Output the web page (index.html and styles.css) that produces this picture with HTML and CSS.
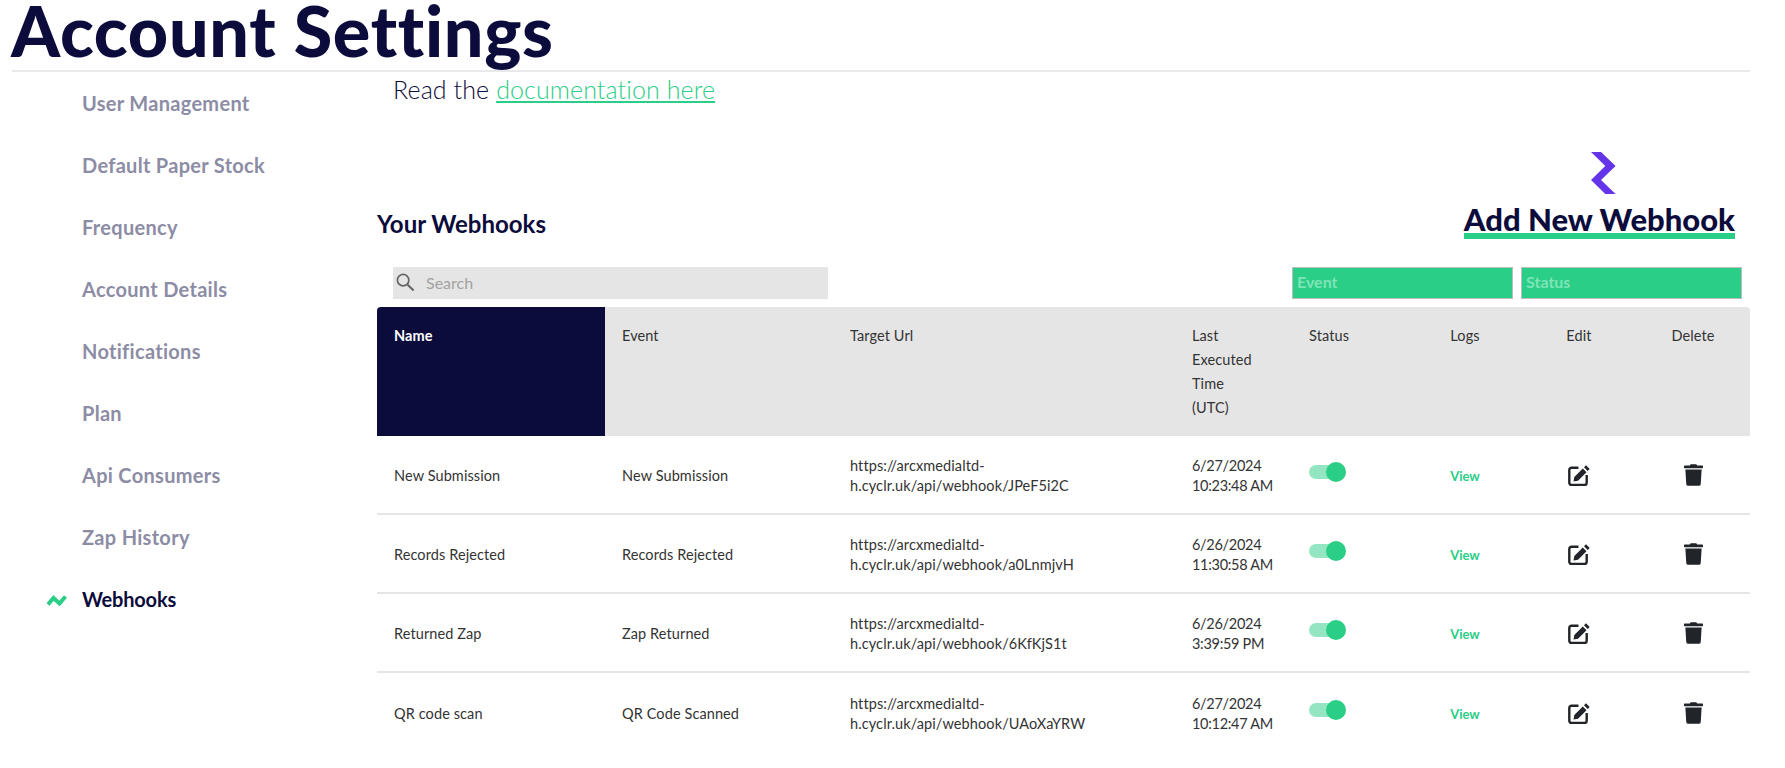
FILE: index.html
```html
<!DOCTYPE html>
<html lang="en">
<head>
<meta charset="utf-8">
<title>Account Settings</title>
<link rel="stylesheet" href="styles.css">
</head>
<body>
<header class="page-head"><h1 class="page-title">Account Settings</h1></header>
<div class="layout">
  <nav class="side">
    <a class="side-item">User Management</a>
    <a class="side-item">Default Paper Stock</a>
    <a class="side-item">Frequency</a>
    <a class="side-item">Account Details</a>
    <a class="side-item">Notifications</a>
    <a class="side-item">Plan</a>
    <a class="side-item">Api Consumers</a>
    <a class="side-item">Zap History</a>
    <a class="side-item side-active">
      <svg class="side-mark" viewBox="0 0 20 12"><path d="M1 10.5 6.500 4l6 5.500 6-7" fill="none" stroke="#2ace86" stroke-width="4"/></svg>
      Webhooks
    </a>
  </nav>
  <main class="main">
    <p class="doc">Read the <a class="doc-link">documentation here</a></p>
    <div class="bar">
      <h2 class="bar-title">Your Webhooks</h2>
      <div class="add">
        <svg class="add-icon" viewBox="0 0 25 42"><polygon points="0,0 10,0 24.600,14 10,28 24.600,42 14.300,42 0,28 14.300,14" fill="#6334e8"/></svg>
        <a class="add-link">Add New Webhook</a>
      </div>
    </div>
    <div class="filters">
      <div class="search">
        <svg class="search-icon" viewBox="0 0 20 20"><circle cx="7.500" cy="7.500" r="6" fill="none" stroke="#666" stroke-width="1.800"/><path d="M12 12l6.500 6.500" stroke="#666" stroke-width="2.200"/></svg>
        <span>Search</span>
      </div>
      <div class="pick">Event</div>
      <div class="pick">Status</div>
    </div>
    <table class="hooks">
      <colgroup>
        <col class="c-name"><col class="c-event"><col class="c-url"><col class="c-time"><col class="c-status"><col class="c-act"><col class="c-act"><col class="c-act">
      </colgroup>
      <thead>
        <tr>
          <th class="th-name">Name</th><th>Event</th><th>Target Url</th><th>Last<br>Executed<br>Time<br>(UTC)</th><th>Status</th><th class="mid">Logs</th><th class="mid">Edit</th><th class="mid">Delete</th>
        </tr>
      </thead>
      <tbody>
        <tr>
          <td>New Submission</td><td>New Submission</td><td>https://arcxmedialtd-<br>h.cyclr.uk/api/webhook/JPeF5i2C</td><td class="when">6/27/2024<br>10:23:48 AM</td>
          <td><span class="toggle"><span class="knob"></span></span></td><td class="mid"><a class="view">View</a></td>
          <td class="mid"><svg class="ico-edit" viewBox="0 0 22 22"><path d="M10.500 3.800H3.500a2.200 2.200 0 0 0-2.200 2.200v12.800a2.200 2.200 0 0 0 2.200 2.200h13a2.200 2.200 0 0 0 2.200-2.200V11" fill="none" stroke="#212529" stroke-width="2.400"/><path d="M5.500 17.500 6.300 13 14.800 4.500 18.500 8.200 10 16.700zM16 3.300 18 1.300 21.700 5 19.700 7z" fill="#212529"/></svg></td>
          <td class="mid"><svg class="ico-trash" viewBox="0 0 448 512"><path d="M432 32H312l-9.400-18.700A24 24 0 0 0 281.100 0H166.800a23.720 23.720 0 0 0-21.400 13.300L136 32H16A16 16 0 0 0 0 48v32a16 16 0 0 0 16 16h416a16 16 0 0 0 16-16V48a16 16 0 0 0-16-16zM53.200 467a48 48 0 0 0 47.900 45h245.800a48 48 0 0 0 47.900-45L416 128H32z" fill="#212529"/></svg></td>
        </tr>
        <tr>
          <td>Records Rejected</td><td>Records Rejected</td><td>https://arcxmedialtd-<br>h.cyclr.uk/api/webhook/a0LnmjvH</td><td class="when">6/26/2024<br>11:30:58 AM</td>
          <td><span class="toggle"><span class="knob"></span></span></td><td class="mid"><a class="view">View</a></td>
          <td class="mid"><svg class="ico-edit" viewBox="0 0 22 22"><path d="M10.500 3.800H3.500a2.200 2.200 0 0 0-2.200 2.200v12.800a2.200 2.200 0 0 0 2.200 2.200h13a2.200 2.200 0 0 0 2.200-2.200V11" fill="none" stroke="#212529" stroke-width="2.400"/><path d="M5.500 17.500 6.300 13 14.800 4.500 18.500 8.200 10 16.700zM16 3.300 18 1.300 21.700 5 19.700 7z" fill="#212529"/></svg></td>
          <td class="mid"><svg class="ico-trash" viewBox="0 0 448 512"><path d="M432 32H312l-9.400-18.700A24 24 0 0 0 281.100 0H166.800a23.720 23.720 0 0 0-21.400 13.300L136 32H16A16 16 0 0 0 0 48v32a16 16 0 0 0 16 16h416a16 16 0 0 0 16-16V48a16 16 0 0 0-16-16zM53.200 467a48 48 0 0 0 47.900 45h245.800a48 48 0 0 0 47.900-45L416 128H32z" fill="#212529"/></svg></td>
        </tr>
        <tr>
          <td>Returned Zap</td><td>Zap Returned</td><td>https://arcxmedialtd-<br>h.cyclr.uk/api/webhook/6KfKjS1t</td><td class="when">6/26/2024<br>3:39:59 PM</td>
          <td><span class="toggle"><span class="knob"></span></span></td><td class="mid"><a class="view">View</a></td>
          <td class="mid"><svg class="ico-edit" viewBox="0 0 22 22"><path d="M10.500 3.800H3.500a2.200 2.200 0 0 0-2.200 2.200v12.800a2.200 2.200 0 0 0 2.200 2.200h13a2.200 2.200 0 0 0 2.200-2.200V11" fill="none" stroke="#212529" stroke-width="2.400"/><path d="M5.500 17.500 6.300 13 14.800 4.500 18.500 8.200 10 16.700zM16 3.300 18 1.300 21.700 5 19.700 7z" fill="#212529"/></svg></td>
          <td class="mid"><svg class="ico-trash" viewBox="0 0 448 512"><path d="M432 32H312l-9.400-18.700A24 24 0 0 0 281.100 0H166.800a23.720 23.720 0 0 0-21.400 13.300L136 32H16A16 16 0 0 0 0 48v32a16 16 0 0 0 16 16h416a16 16 0 0 0 16-16V48a16 16 0 0 0-16-16zM53.200 467a48 48 0 0 0 47.900 45h245.800a48 48 0 0 0 47.900-45L416 128H32z" fill="#212529"/></svg></td>
        </tr>
        <tr>
          <td>QR code scan</td><td>QR Code Scanned</td><td>https://arcxmedialtd-<br>h.cyclr.uk/api/webhook/UAoXaYRW</td><td class="when">6/27/2024<br>10:12:47 AM</td>
          <td><span class="toggle"><span class="knob"></span></span></td><td class="mid"><a class="view">View</a></td>
          <td class="mid"><svg class="ico-edit" viewBox="0 0 22 22"><path d="M10.500 3.800H3.500a2.200 2.200 0 0 0-2.200 2.200v12.800a2.200 2.200 0 0 0 2.200 2.200h13a2.200 2.200 0 0 0 2.200-2.200V11" fill="none" stroke="#212529" stroke-width="2.400"/><path d="M5.500 17.500 6.300 13 14.800 4.500 18.500 8.200 10 16.700zM16 3.300 18 1.300 21.700 5 19.700 7z" fill="#212529"/></svg></td>
          <td class="mid"><svg class="ico-trash" viewBox="0 0 448 512"><path d="M432 32H312l-9.400-18.700A24 24 0 0 0 281.100 0H166.800a23.720 23.720 0 0 0-21.400 13.300L136 32H16A16 16 0 0 0 0 48v32a16 16 0 0 0 16 16h416a16 16 0 0 0 16-16V48a16 16 0 0 0-16-16zM53.200 467a48 48 0 0 0 47.900 45h245.800a48 48 0 0 0 47.900-45L416 128H32z" fill="#212529"/></svg></td>
        </tr>
      </tbody>
    </table>
  </main>
</div>
</body>
</html>
```
FILE: styles.css
```css
* { box-sizing: border-box; }
html, body { margin: 0; padding: 0; background: #fff; }
body { font-family: "Lato", "Liberation Sans", sans-serif; color: #333; overflow: hidden; font-variant-ligatures: none; }

.page-head { margin: 0 35px 0 12px; border-bottom: 2px solid #e9e9ec; height: 72px; }
.page-title { margin: 0 0 0 -1px; font-size: 70px; line-height: 60px; font-weight: 900; letter-spacing: 0.7px; color: #0c0c3c; }

.layout { display: flex; margin-right: 35px; }

.side { width: 377px; flex: none; display: flex; flex-direction: column; padding: 16px 0 0 82px; }
.side-item { position: relative; height: 62px; line-height: 30px; font-size: 20px; font-weight: 700; letter-spacing: 0.3px; color: #8c8ca5; white-space: nowrap; }
.side-active { color: #0c0c3c; letter-spacing: -0.2px; }
.side-mark { position: absolute; left: -35px; top: 10px; width: 20px; height: 12px; }

.main { flex: 1; min-width: 0; }
.doc { margin: 0; padding-left: 16px; height: 36px; line-height: 34px; font-size: 25px; font-weight: 300; letter-spacing: 0.1px; color: #0c0c3c; }
.doc-link { color: #2ace86; text-decoration: underline; }

.bar { display: flex; justify-content: space-between; align-items: flex-end; margin-top: 44px; padding-right: 15px; height: 95px; }
.bar-title { margin: 0 0 8px; font-size: 24px; line-height: 30px; font-weight: 700; color: #0c0c3c; }
.add { display: flex; flex-direction: column; align-items: center; margin-bottom: 8px; }
.add-icon { width: 25px; height: 42px; margin-left: 8px; display: block; }
.add-link { display: block; font-size: 31px; line-height: 30px; height: 35px; margin-top: 10px; font-weight: 900; color: #0c0c3c; border-bottom: 6px solid #2ace86; white-space: nowrap; }

.filters { display: flex; gap: 8px; margin-top: 20px; padding: 0 8px 0 16px; height: 32px; }
.search { flex: 1; margin-right: 456px; background: #e5e5e5; display: flex; align-items: center; gap: 11px; padding-left: 3px; padding-bottom: 1px; font-size: 16px; color: #a2a2a2; }
.search-icon { width: 19px; height: 19px; flex: none; }
.pick { width: 221px; flex: none; background: #2ace86; border: 1px solid #bdbdbd; padding-left: 4px; line-height: 28px; font-size: 16px; font-weight: 700; color: #7fe4b8; }

.hooks { width: 100%; margin-top: 8px; table-layout: fixed; border-collapse: separate; border-spacing: 0; font-size: 14.5px; letter-spacing: 0.1px; }
.c-name, .c-event { width: 228px; }
.c-url { width: 342px; }
.c-time { width: 117px; }
.c-status { width: 116px; }
.c-act { width: 114px; }
.hooks th { background: #e5e5e5; padding: 17px 16px 15px 17px; height: 129px; vertical-align: top; text-align: left; font-weight: 400; line-height: 24px; color: #333; }
.hooks th:last-child { border-top-right-radius: 4px; }
.hooks .th-name { background: #0c0c3c; color: #fff; font-weight: 700; border-top-left-radius: 4px; }
.hooks td { height: 79px; padding: 2px 16px 0 17px; line-height: 20px; vertical-align: middle; border-bottom: 2px solid #e5e5e5; white-space: nowrap; }
.hooks tr:last-child td { border-bottom: 0; }
.hooks .mid { text-align: center; padding-left: 0; padding-right: 0; }
.hooks .when { letter-spacing: -0.3px; }

.toggle { display: block; position: relative; width: 34px; height: 14px; margin-top: -7px; border-radius: 7px; background: #94e6c2; }
.knob { position: absolute; right: -3px; top: -3px; width: 20px; height: 20px; border-radius: 50%; background: #2ace86; }
.view { color: #2ace86; font-weight: 700; font-size: 13px; letter-spacing: 0; }
.ico-edit { width: 22px; height: 22px; display: block; margin: -2px auto 0; }
.ico-trash { width: 19px; height: 22px; display: block; margin: -2px auto 0; }
```
